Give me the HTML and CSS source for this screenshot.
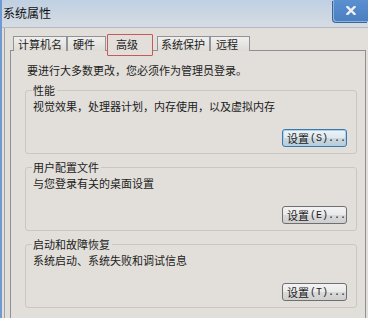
FILE: index.html
```html
<!DOCTYPE html>
<html lang="zh-CN">
<head>
    <meta charset="UTF-8">
    <meta name="viewport" content="width=device-width, initial-scale=1.0">
    <title>系统属性</title>
    <link rel="stylesheet" href="styles.css">
</head>
<body>
<main class="window">
    <header class="titlebar">
        <span class="title">系统属性</span>
        <button class="close" aria-label="关闭">
            <svg width="10" height="9" viewBox="0 0 10 9"><path d="M1.5 1 L8.5 8 M8.5 1 L1.5 8" stroke="#f0f0f0" stroke-width="2.4" stroke-linecap="square"/></svg>
        </button>
    </header>

    <section class="frame">
        <nav class="tabs">
            <span class="tab tab-name">计算机名</span>
            <span class="tab tab-hw">硬件</span>
            <span class="tab tab-active">高级</span>
            <span class="tab tab-protect">系统保护</span>
            <span class="tab tab-remote">远程</span>
        </nav>

        <div class="panel">
            <p class="intro">要进行大多数更改，您必须作为管理员登录。</p>

            <fieldset class="group">
                <legend>性能</legend>
                <p class="desc">视觉效果，处理器计划，内存使用，以及虚拟内存</p>
                <div class="actions"><button class="btn btn-default">设置<span class="mono">(S)...</span></button></div>
            </fieldset>

            <fieldset class="group">
                <legend>用户配置文件</legend>
                <p class="desc">与您登录有关的桌面设置</p>
                <div class="actions"><button class="btn">设置<span class="mono">(E)...</span></button></div>
            </fieldset>

            <fieldset class="group">
                <legend>启动和故障恢复</legend>
                <p class="desc">系统启动、系统失败和调试信息</p>
                <div class="actions"><button class="btn">设置<span class="mono">(T)...</span></button></div>
            </fieldset>
        </div>
    </section>
</main>
</body>
</html>
```

FILE: styles.css
```css
*, *::before, *::after{
    box-sizing: border-box;
    padding: 0;
    margin: 0;
}

body{
    width: 368px;
    height: 318px;
    overflow: hidden;
    font-family: "Noto Sans CJK SC", "Noto Sans", sans-serif;
    font-size: 11px;
    color: #1c1c1c;
}

.window{
    width: 368px;
    height: 318px;
    display: flex;
    flex-direction: column;
    background-color: #e2dfda;
    border-left: 2px solid #6f9bd2;
}

.titlebar{
    flex: none;
    height: 28px;
    display: flex;
    align-items: flex-start;
    background: linear-gradient(#bfd0e3, #cdd7e2 60%, #d6dce2);
    border-bottom: 1px solid #b4bac2;
}

.title{
    padding: 6px 0 0 1px;
    font-size: 12px;
    line-height: 14px;
    color: #111;
}

.close{
    margin-left: auto;
    width: 35px;
    height: 22px;
    display: flex;
    align-items: center;
    justify-content: center;
    background: linear-gradient(#5a90d0, #4a80c2);
    border: 1px solid #8fb2dc;
    border-top: none;
    border-right: none;
    border-radius: 0 0 0 4px;
    box-shadow: -1px 1px 0 #3d6496;
}

.frame{
    flex: 1;
    display: flex;
    flex-direction: column;
    margin-left: 2px;
    padding: 0 2px 0 5px;
    border-left: 1px solid #9ea3a9;
    min-height: 0;
}

.tabs{
    flex: none;
    height: 23px;
    display: flex;
    align-items: flex-end;
    padding-left: 3px;
    position: relative;
    z-index: 1;
    margin-bottom: -1px;
}

.tab{
    height: 15px;
    padding-left: 4px;
    line-height: 14px;
    border: 1px solid #8f939a;
    border-bottom: none;
    background: linear-gradient(#f0efed, #dedbd6);
    white-space: nowrap;
}

.tab-name{ width: 54px; }
.tab-hw{ width: 39px; padding-left: 5px; }
.tab-protect{ width: 53px; margin-left: 4px; padding-left: 3px; }
.tab-remote{ width: 40px; padding-left: 5px; }

.tab-active{
    width: 46px;
    height: 22px;
    margin-left: 1px;
    margin-bottom: -5px;
    padding: 3px 0 0 8px;
    line-height: 13px;
    background: #e2dfda;
    border: 1px solid #c8585a;
    border-radius: 1px;
}

.panel{
    flex: 1;
    padding: 12px 8px 0 14px;
    border: 1px solid #8d9097;
    border-bottom: none;
    background-color: #e2dfda;
}

.intro{
    padding-left: 2px;
    line-height: 14px;
    margin-bottom: 7px;
}

.group{
    border: 1px solid #cac6c0;
    border-radius: 3px;
    padding: 0 9px 6px 6px;
    margin-bottom: 7px;
}

.group legend{
    padding: 0 2px 0 1px;
    line-height: 13px;
}

.desc{
    padding-left: 1px;
    margin-top: 3px;
    line-height: 13px;
}

.actions{
    display: flex;
    justify-content: flex-end;
    margin-top: 16px;
}

.btn{
    width: 65px;
    height: 18px;
    padding-left: 4px;
    display: flex;
    align-items: center;
    font-family: inherit;
    font-size: 11px;
    color: #1c1c1c;
    border: 1px solid #6f6f6f;
    border-radius: 3px;
    background: linear-gradient(#f3f3f3, #e9e9e9 50%, #dadada 51%, #cfcfcf);
}

.btn-default{
    border-color: #3e78a8;
    background: linear-gradient(#edf4f8, #dfe8ee 50%, #cbd8e0 51%, #bccbd5);
    box-shadow: inset 0 0 0 1px #a9d0ec;
}

.mono{
    font-family: "Liberation Mono", monospace;
    font-size: 10px;
    margin-left: 1px;
}
```
